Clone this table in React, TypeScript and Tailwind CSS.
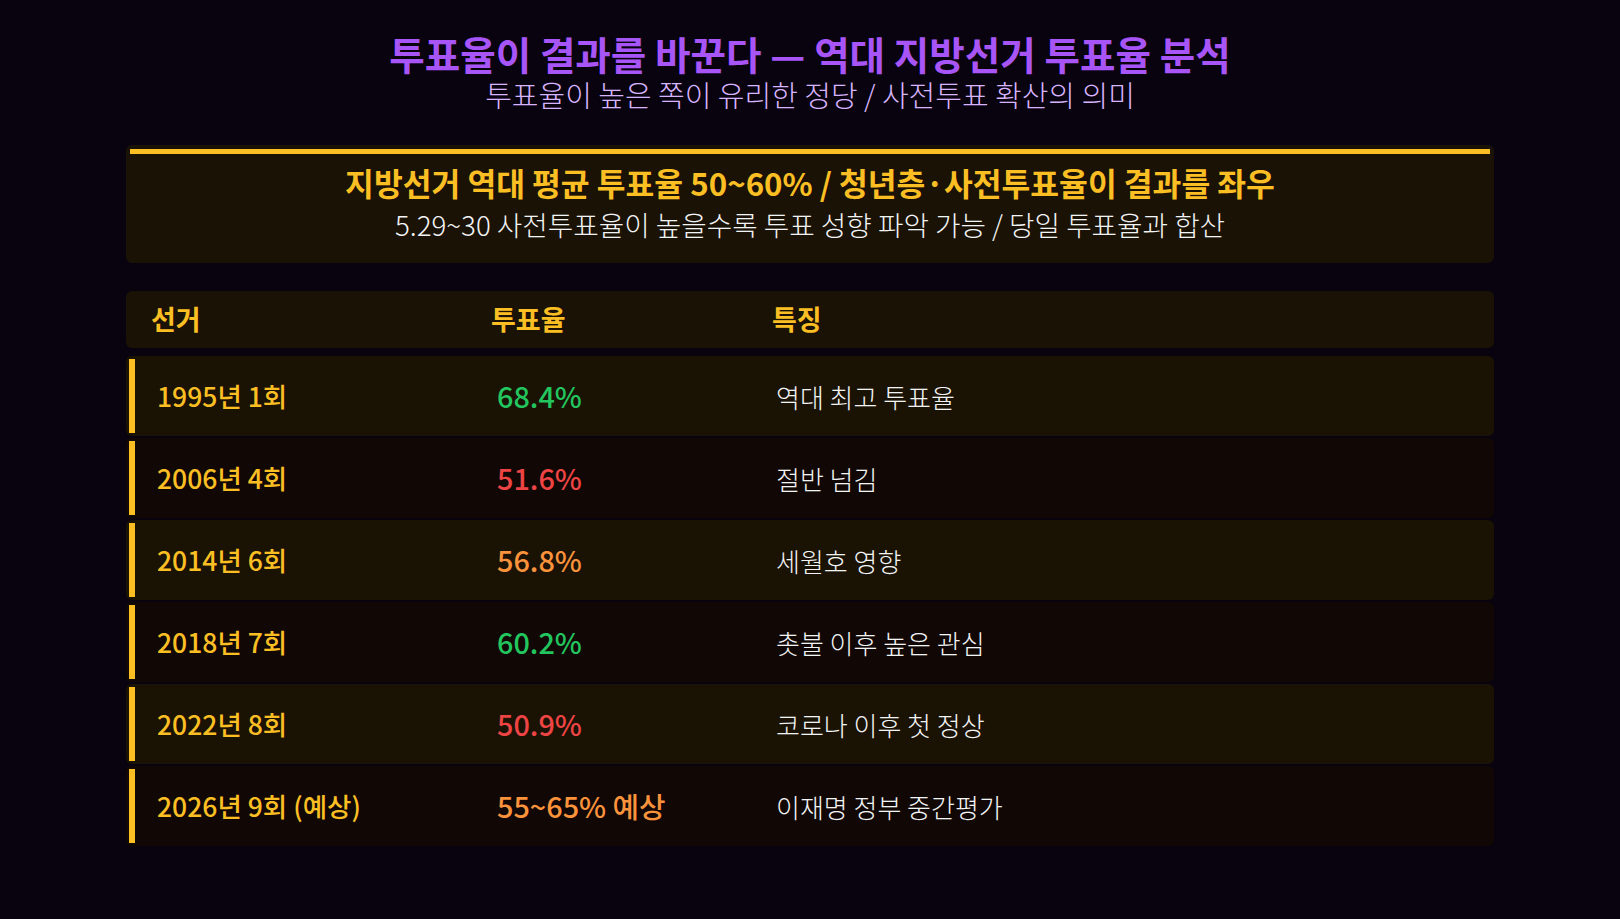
const rows = [
  { name: "1995년 1회", rate: "68.4%", tone: "text-[#22c55e]", note: "역대 최고 투표율" },
  { name: "2006년 4회", rate: "51.6%", tone: "text-[#ef4444]", note: "절반 넘김" },
  { name: "2014년 6회", rate: "56.8%", tone: "text-[#fb923c]", note: "세월호 영향" },
  { name: "2018년 7회", rate: "60.2%", tone: "text-[#22c55e]", note: "촛불 이후 높은 관심" },
  { name: "2022년 8회", rate: "50.9%", tone: "text-[#ef4444]", note: "코로나 이후 첫 정상" },
  { name: "2026년 9회 (예상)", rate: "55~65% 예상", tone: "text-[#fb923c]", note: "이재명 정부 중간평가" },
];

export default function App() {
  return (
    <div
      className="min-h-[919px] w-full bg-[#08030f] px-[126px] pt-[30px] pb-10"
      style={{ fontFamily: '"Noto Sans CJK KR", "Noto Sans", sans-serif' }}
    >
      {/* 제목 */}
      <div className="text-center">
        <h1 className="text-[38.6px] font-bold leading-[46px] text-[#a855f7]">
          투표율이 결과를 바꾼다 — 역대 지방선거 투표율 분석
        </h1>
        <p className="text-[29px] font-light leading-[36px] text-[#d8b4fe]">
          투표율이 높은 쪽이 유리한 정당 / 사전투표 확산의 의미
        </p>
      </div>

      {/* 요약 박스 */}
      <div className="mt-[33px] rounded-md bg-[#1a1204] p-1">
        <div className="h-[5px] bg-[#fbbf24]" />
        <div className="flex flex-col items-center pt-[9px] pb-[17px]">
          <div className="text-[31.3px] font-bold leading-[40px] text-[#fbbf24]">
            지방선거 역대 평균 투표율 50~60% / 청년층·사전투표율이 결과를 좌우
          </div>
          <div className="mt-[3px] text-[27.7px] font-light leading-[36px] text-[#f3f4f6]">
            5.29~30 사전투표율이 높을수록 투표 성향 파악 가능 / 당일 투표율과 합산
          </div>
        </div>
      </div>

      {/* 표 */}
      <div className="mt-[28px] grid h-[57px] grid-cols-[340px_281px_1fr] items-center rounded-md bg-[#1a1204] px-[25px] text-[27px] font-bold text-[#fbbf24]">
        <div>선거</div>
        <div>투표율</div>
        <div>특징</div>
      </div>

      <div className="mt-[8px] flex flex-col gap-[2px]">
        {rows.map((r, i) => (
          <div
            key={r.name}
            className={`flex h-[80px] items-stretch rounded-md p-[3px] ${
              i % 2 === 0 ? "bg-[#1a1203]" : "bg-[#110805]"
            }`}
          >
            <div className="w-[6px] bg-[#fbbf24]" />
            <div className="grid flex-1 grid-cols-[340px_279px_1fr] items-center pl-[22px]">
              <div className="text-[26.5px] font-medium text-[#fbbf24]">{r.name}</div>
              <div className={`text-[28.8px] font-medium ${r.tone}`}>{r.rate}</div>
              <div className="text-[26px] font-light text-[#f3f4f6]">{r.note}</div>
            </div>
          </div>
        ))}
      </div>
    </div>
  );
}
